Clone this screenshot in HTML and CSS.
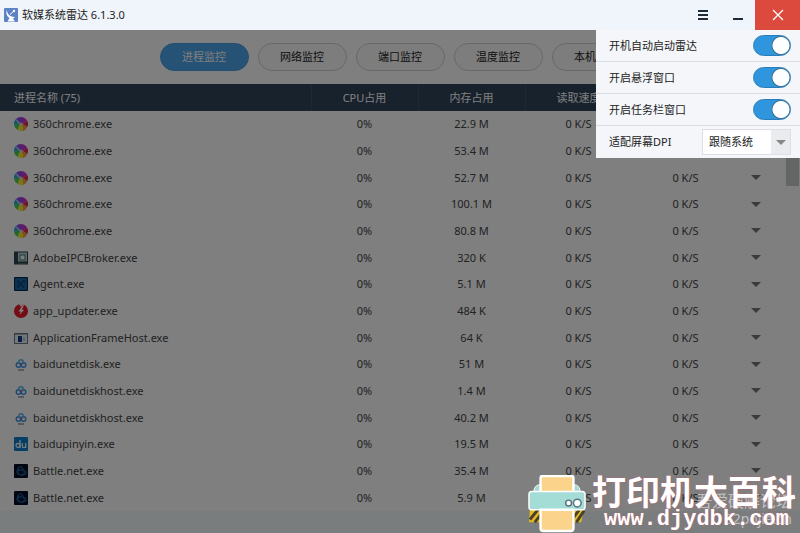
FILE: index.html
```html
<!DOCTYPE html>
<html lang="zh-CN">

<head>
	<meta charset="UTF-8">
	<meta name="viewport" content="width=device-width, initial-scale=1.0">
	<title>软媒系统雷达 6.1.3.0</title>
	<link rel="stylesheet" href="styles.css">
</head>

<body>
	<svg class="sprites" aria-hidden="true">
		<symbol id="i-chrome" viewBox="0 0 14 14">
			<path d="M7 7 2 2A7 7 0 0 1 7 0q3 3 0 7z" fill="#8848e8" />
			<path d="M7 7Q9 3 7 0a7 7 0 0 1 6 3.500Q11 7 7 7z" fill="#d030d0" />
			<path d="M7 7q4 0 6-3.500a7 7 0 0 1 0 7Q11 7 7 7z" fill="#d82838" />
			<path d="M7 7q4 0 6 3.500A7 7 0 0 1 9 14Q9 9 7 7z" fill="#f0a040" />
			<path d="M7 7q2 2 2 7a7 7 0 0 1-5-1Q4 9 7 7z" fill="#f4ec30" />
			<path d="M7 7q-3 2-3 6a7 7 0 0 1-4-5Q3 6 7 7z" fill="#48d050" />
			<path d="M7 7Q3 6 0 8a7 7 0 0 1 2-6q1 4 5 5z" fill="#30a8d8" />
			<circle cx="7" cy="7" r="1.500" fill="#f0c8d8" />
		</symbol>
		<symbol id="i-adobe" viewBox="0 0 14 14">
			<rect x=".5" y="1" width="13" height="12" fill="#b8d0d8" stroke="#2a4048" />
			<path d="M0 1h4v12H0z" fill="#2a4850" />
			<rect x="6" y="4" width="5" height="5" fill="#e8fff8" stroke="#48786c" />
			<path d="M1 11.500h12" stroke="#2a4048" stroke-width="2" />
		</symbol>
		<symbol id="i-agent" viewBox="0 0 14 14">
			<rect width="14" height="14" rx="1" fill="#0a2038" />
			<rect x="1" y="1" width="12" height="12" fill="#1464a4" />
			<path d="M4 3v8M4 4l3 3-3 3M10 3 7 7l3 4M10 3v3" fill="none" stroke="#0a3868" />
		</symbol>
		<symbol id="i-updater" viewBox="0 0 14 14">
			<circle cx="7" cy="7" r="7" fill="#e8182c" />
			<path d="M9.500 0 4.500 7.500h2.300L5.500 11l4.700-5.200H7.800L10.500 0zM5 0l4 0-2 3z" fill="#fff" />
		</symbol>
		<symbol id="i-frame" viewBox="0 0 14 14">
			<rect x=".5" y="2.500" width="13" height="10" fill="#e8f0f8" stroke="#687888" />
			<path d="M1 3.500h12" stroke="#a0b0c0" />
			<rect x="4" y="5" width="4" height="6" fill="#103c88" />
			<path d="M10 6v4" stroke="#8098b0" />
		</symbol>
		<symbol id="i-disk" viewBox="0 0 14 14">
			<g fill="none" stroke-width="1.400">
				<circle cx="4.500" cy="8" r="2.300" stroke="#3c94e8" />
				<circle cx="9.500" cy="8" r="2.300" stroke="#3c94e8" />
				<circle cx="7" cy="5" r="2.300" stroke="#58b8ec" />
			</g>
			<circle cx="7" cy="7.500" r="1" fill="#d84878" />
			<path d="M4 13h6" stroke="#586878" />
		</symbol>
		<symbol id="i-du" viewBox="0 0 14 14">
			<rect width="14" height="14" rx="1" fill="#0c7cc8" />
			<g fill="none" stroke="#e8f8ff" stroke-width="1.300">
				<circle cx="4" cy="8.500" r="2" />
				<path d="M6 3v8M8.300 6v3q0 1.700 1.700 1.700T11.700 9V6v5" />
			</g>
		</symbol>
		<symbol id="i-battle" viewBox="0 0 14 14">
			<rect width="14" height="14" rx="1" fill="#020c20" />
			<g fill="none" stroke="#1c5c9c" stroke-width="1.100">
				<path d="M3 9c0-4 2-7 4-6s4 5 3 7-5 1-7-1" />
				<path d="M3 7c3-2 8-1 9 1s-2 3-5 3-4-3-2-6" />
			</g>
		</symbol>
	</svg>

	<header class="titlebar">
		<svg class="logo" viewBox="0 0 14 14" aria-hidden="true">
			<rect width="14" height="14" rx="1" fill="#5b83c6" />
			<path d="M3 2c0 4 3 7 8 7L9 10.500l2 3H3.500l2-3.500C3 8.500 1.500 5 3 2z" fill="#fff" />
			<path d="M6 6.500 10 3" stroke="#fff" />
			<circle cx="10" cy="3" r="1.200" fill="#fff" />
		</svg>
		<h1 class="title">软媒系统雷达 6.1.3.0</h1>
		<button class="win-btn" aria-label="菜单">
			<svg viewBox="0 0 12 12"><path d="M1 2h10M1 6h10M1 10h10" stroke="#1c2a3a" stroke-width="2" /></svg>
		</button>
		<button class="win-btn" aria-label="最小化">
			<svg viewBox="0 0 12 12"><path d="M1 10h10" stroke="#1c2a3a" stroke-width="2" /></svg>
		</button>
		<button class="win-btn close" aria-label="关闭">
			<svg viewBox="0 0 12 12"><path d="M1 1l10 10M11 1 1 11" stroke="#fff" stroke-width="1.300" /></svg>
		</button>
	</header>

	<main class="content">
		<nav class="tabs">
			<button class="tab active">进程监控</button>
			<button class="tab">网络监控</button>
			<button class="tab">端口监控</button>
			<button class="tab">温度监控</button>
			<button class="tab">本机信息</button>
		</nav>
		<table class="process">
			<colgroup>
				<col>
				<col class="num">
				<col class="num">
				<col class="num">
				<col class="num">
				<col class="more">
			</colgroup>
			<thead>
				<tr><th>进程名称 (75)</th><th>CPU占用</th><th>内存占用</th><th>读取速度</th><th>写入速度</th><th></th></tr>
			</thead>
			<tbody id="rows"></tbody>
		</table>
		<div class="statusbar"></div>
		<div class="thumb"></div>
		<div class="shade"></div>

		<form class="settings">
			<label class="option">开机自动启动雷达<input class="switch" type="checkbox" checked></label>
			<label class="option">开启悬浮窗口<input class="switch" type="checkbox" checked></label>
			<label class="option">开启任务栏窗口<input class="switch" type="checkbox" checked></label>
			<div class="option">
				<label for="dpi">适配屏幕DPI</label>
				<span class="picker">
					<select id="dpi"><option>跟随系统</option></select>
				</span>
			</div>
		</form>
	</main>

	<div class="forum">
		<div>吾爱破解论坛</div>
		<div class="forum-url">52pojie.cn</div>
	</div>
	<div class="brand">
		<svg class="printer" viewBox="0 0 60 60" aria-hidden="true">
			<path d="M6 18q0-8 7-8h34q7 0 7 8z" fill="#a4d8d4" stroke="#fff" />
			<path d="M2 35h56l-3 14H1z" fill="#e4b820" />
			<path d="m2 46 9-11M7 49l10-13M44 48l9-12M50 49l8-12" stroke="#4a4028" stroke-width="3" />
			<rect x="13" y="1" width="34" height="20" rx="2" fill="#fbd38a" stroke="#fff" stroke-width="2.500" />
			<rect x="1" y="17" width="58" height="19" rx="3" fill="#a4dcd6" stroke="#fff" stroke-width="1.500" />
			<path d="M13 36h34v19q0 3-3 3H16q-3 0-3-3z" fill="#fbd38a" stroke="#fff" stroke-width="2.500" />
			<g fill="#fff" stroke="#5a7080" stroke-width="1.500">
				<circle cx="42" cy="29" r="3" />
				<circle cx="51" cy="29" r="4" />
			</g>
		</svg>
		<div class="brand-text">
			<div class="brand-name">打印机大百科</div>
			<div class="brand-url">www.djydbk.com</div>
		</div>
	</div>

	<script>
		const processes = [
			['chrome', '360chrome.exe', '22.9 M'],
			['chrome', '360chrome.exe', '53.4 M'],
			['chrome', '360chrome.exe', '52.7 M'],
			['chrome', '360chrome.exe', '100.1 M'],
			['chrome', '360chrome.exe', '80.8 M'],
			['adobe', 'AdobeIPCBroker.exe', '320 K'],
			['agent', 'Agent.exe', '5.1 M'],
			['updater', 'app_updater.exe', '484 K'],
			['frame', 'ApplicationFrameHost.exe', '64 K'],
			['disk', 'baidunetdisk.exe', '51 M'],
			['disk', 'baidunetdiskhost.exe', '1.4 M'],
			['disk', 'baidunetdiskhost.exe', '40.2 M'],
			['du', 'baidupinyin.exe', '19.5 M'],
			['battle', 'Battle.net.exe', '35.4 M'],
			['battle', 'Battle.net.exe', '5.9 M']
		];

		document.getElementById('rows').innerHTML = processes.map(([icon, name, memory]) => `
			<tr>
				<td><span class="name"><svg class="icon"><use href="#i-${icon}"/></svg>${name}</span></td>
				<td>0%</td>
				<td>${memory}</td>
				<td>0 K/S</td>
				<td>0 K/S</td>
				<td><button class="expand" aria-label="${name}"></button></td>
			</tr>`).join('');
	</script>
</body>

</html>
```
FILE: styles.css
```css
* {
	box-sizing: border-box;
}

body {
	margin: 0;
	min-height: 100vh;
	display: flex;
	flex-direction: column;
	position: relative;
	overflow: hidden;
	font: 11px/16px "Noto Sans", "Noto Sans CJK SC", sans-serif;
	color: #222;
}

button,
select {
	font: inherit;
	color: inherit;
	border: 0;
	padding: 0;
}

.sprites {
	position: absolute;
	width: 0;
	height: 0;
}

/* Title bar */
.titlebar {
	display: flex;
	align-items: center;
	height: 30px;
	padding-left: 4px;
	background: #f0f5fb;
}

.logo {
	width: 14px;
	height: 14px;
	margin-right: 4px;
}

.title {
	flex: 1;
	margin: 0;
	font-size: 11px;
	font-weight: normal;
}

.win-btn {
	display: flex;
	align-items: center;
	justify-content: center;
	width: 35px;
	height: 30px;
	background: none;
}

.win-btn svg {
	width: 12px;
	height: 12px;
}

.win-btn.close {
	width: 45px;
	background: #dc4a3d;
}

/* Process list */
.content {
	flex: 1;
	display: flex;
	flex-direction: column;
	position: relative;
	background: #fff;
}

.tabs {
	display: flex;
	justify-content: center;
	gap: 9px;
	padding: 13px 0;
}

.tab {
	width: 89px;
	height: 28px;
	border: 1px solid #d0d0d4;
	border-radius: 14px;
	background: #fafafa;
}

.tab.active {
	border-color: #4a9fe0;
	background: #4aa4ea;
	color: #fff;
}

.process {
	width: 100%;
	height: 427px;
	table-layout: fixed;
	border-collapse: collapse;
	text-align: center;
	color: #444;
}

.process .num {
	width: 107px;
}

.process .more {
	width: 61px;
}

.process th,
.process td {
	padding: 0;
}

.process th {
	height: 27px;
	background: #30445a;
	color: #fff;
	font-weight: normal;
}

.process th + th {
	border-left: 1px solid #3c5068;
}

.process th:first-child,
.process td:first-child {
	padding-left: 14px;
	text-align: left;
}

.process td:last-child {
	padding-right: 27px;
}

.name {
	display: flex;
	align-items: center;
	gap: 5px;
}

.icon {
	width: 14px;
	height: 14px;
}

.expand {
	display: block;
	margin: 0 auto;
	border: 5px solid transparent;
	border-top-color: #777;
	border-bottom: 0;
	background: none;
}

.statusbar {
	flex: 1;
	background: #f4fbfa;
}

.thumb {
	position: absolute;
	top: 100px;
	right: 1px;
	width: 13px;
	height: 56px;
	background: #c8cccc;
}

.shade {
	position: absolute;
	inset: 0;
	background: rgba(0, 0, 0, .5);
}

/* Settings menu */
.settings {
	position: absolute;
	top: 0;
	right: 0;
	width: 204px;
	background: #f4f6fa;
}

.option {
	display: flex;
	align-items: center;
	justify-content: space-between;
	height: 32px;
	padding: 0 9px 0 13px;
	border-bottom: 1px solid #d9dce0;
}

.option:last-child {
	border-bottom: 0;
}

.switch {
	appearance: none;
	width: 38px;
	height: 21px;
	margin: 0;
	border: 1px solid #2a7cb8;
	border-radius: 11px;
	background: radial-gradient(circle at 27px 50%, #fff 8px, #3a7090 9px, #2f96de 10px);
}

.picker {
	position: relative;
}

.picker select {
	appearance: none;
	display: block;
	width: 89px;
	height: 26px;
	padding-left: 6px;
	border: 1px solid #dcdfe3;
	border-radius: 0;
	background: linear-gradient(to left, #e9ebee 19px, #fff 19px);
}

.picker::after {
	content: "";
	position: absolute;
	top: 11px;
	right: 5px;
	border: 5px solid transparent;
	border-top-color: #888;
	border-bottom: 0;
	pointer-events: none;
}

/* Watermarks */
.forum {
	position: absolute;
	right: 8px;
	bottom: 5px;
	font-size: 16px;
	line-height: 18px;
	text-align: right;
	color: rgba(255, 255, 255, .55);
}

.forum-url {
	font-size: 14px;
}

.brand {
	position: absolute;
	right: 4px;
	bottom: 0;
	display: flex;
	align-items: center;
	gap: 6px;
	color: #fff;
	text-shadow: 0 0 2px #c06070;
}

.printer {
	width: 58px;
	height: 58px;
}

.brand-name {
	font: bold 34px/32px "Noto Sans CJK SC", sans-serif;
}

.brand-url {
	padding-left: 12px;
	font: bold 22px/26px "Liberation Mono", monospace;
}
```
